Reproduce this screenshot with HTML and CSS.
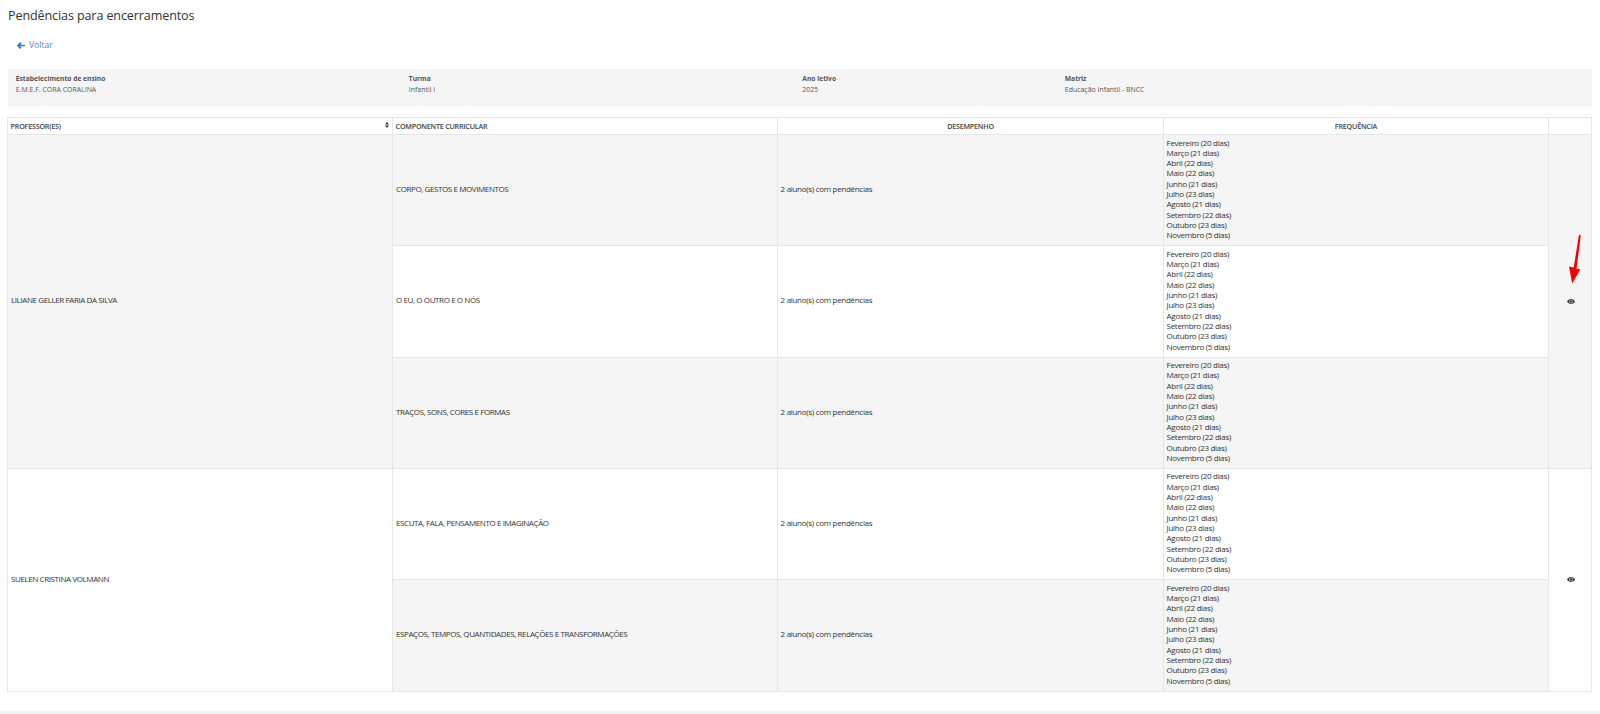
FILE: index.html
```html
<!DOCTYPE html>
<html lang="pt-BR">
<head>
<meta charset="utf-8">
<title>Pendências para encerramentos</title>
<link rel="stylesheet" href="styles.css">
</head>
<body>
<main class="page">
  <h1 class="title">Pendências para encerramentos</h1>
  <a class="back" href="#">
    <svg class="back-icon" viewBox="0 0 16 14"><path d="M7 0.6 L8.6 2.2 C9 2.6 9 3.2 8.6 3.6 L6 5.4 H14.6 C15.4 5.4 16 6 16 6.8 V7.4 C16 8.2 15.4 8.6 14.6 8.6 H6 L8.6 10.6 C9 11 9 11.6 8.6 12 L7 13.4 C6.6 13.8 6 13.8 5.6 13.4 L0.4 7.9 C0 7.5 0 6.9 0.4 6.5 L5.6 0.6 C6 0.2 6.6 0.2 7 0.6 Z"/></svg>
    Voltar
  </a>
  <section class="info">
    <div class="info-item"><strong>Estabelecimento de ensino</strong><span>E.M.E.F. CORA CORALINA</span></div>
    <div class="info-item"><strong>Turma</strong><span>Infantil I</span></div>
    <div class="info-item"><strong>Ano letivo</strong><span>2025</span></div>
    <div class="info-item"><strong>Matriz</strong><span>Educação Infantil - BNCC</span></div>
  </section>
  <table class="grid">
    <colgroup><col class="c-prof"><col class="c-comp"><col class="c-des"><col class="c-freq"><col class="c-act"></colgroup>
    <thead>
      <tr>
        <th class="sortable">PROFESSOR(ES)<svg class="sort" viewBox="0 0 6 9"><path d="M3 0 L6 3.6 H0 Z M3 9 L0 5.4 H6 Z"/></svg></th>
        <th>COMPONENTE CURRICULAR</th>
        <th class="center">DESEMPENHO</th>
        <th class="center">FREQUÊNCIA</th>
        <th></th>
      </tr>
    </thead>
    <tbody>
      <tr class="odd">
        <td rowspan="3" class="up">LILIANE GELLER FARIA DA SILVA</td>
        <td class="up">CORPO, GESTOS E MOVIMENTOS</td>
        <td>2 aluno(s) com pendências</td>
        <td class="freq">Fevereiro (20 dias)<br>Março (21 dias)<br>Abril (22 dias)<br>Maio (22 dias)<br>Junho (21 dias)<br>Julho (23 dias)<br>Agosto (21 dias)<br>Setembro (22 dias)<br>Outubro (23 dias)<br>Novembro (5 dias)</td>
        <td rowspan="3" class="center act"><svg class="eye" viewBox="0 0 16 10"><path d="M8 0 C4.4 0 1.6 2.2 0 5 C1.6 7.8 4.4 10 8 10 C11.6 10 14.4 7.8 16 5 C14.4 2.2 11.6 0 8 0 Z M8 1.4 C9.9 1.4 11.6 3.1 11.6 5 C11.6 6.9 9.9 8.6 8 8.6 C6.1 8.6 4.4 6.9 4.4 5 C4.4 3.1 6.1 1.4 8 1.4 Z"/><circle cx="8" cy="5" r="2.6"/></svg></td>
      </tr>
      <tr>
        <td class="up">O EU, O OUTRO E O NÓS</td>
        <td>2 aluno(s) com pendências</td>
        <td class="freq">Fevereiro (20 dias)<br>Março (21 dias)<br>Abril (22 dias)<br>Maio (22 dias)<br>Junho (21 dias)<br>Julho (23 dias)<br>Agosto (21 dias)<br>Setembro (22 dias)<br>Outubro (23 dias)<br>Novembro (5 dias)</td>
      </tr>
      <tr class="odd">
        <td class="up">TRAÇOS, SONS, CORES E FORMAS</td>
        <td>2 aluno(s) com pendências</td>
        <td class="freq">Fevereiro (20 dias)<br>Março (21 dias)<br>Abril (22 dias)<br>Maio (22 dias)<br>Junho (21 dias)<br>Julho (23 dias)<br>Agosto (21 dias)<br>Setembro (22 dias)<br>Outubro (23 dias)<br>Novembro (5 dias)</td>
      </tr>
      <tr>
        <td rowspan="2" class="up">SUELEN CRISTINA VOLMANN</td>
        <td class="up">ESCUTA, FALA, PENSAMENTO E IMAGINAÇÃO</td>
        <td>2 aluno(s) com pendências</td>
        <td class="freq">Fevereiro (20 dias)<br>Março (21 dias)<br>Abril (22 dias)<br>Maio (22 dias)<br>Junho (21 dias)<br>Julho (23 dias)<br>Agosto (21 dias)<br>Setembro (22 dias)<br>Outubro (23 dias)<br>Novembro (5 dias)</td>
        <td rowspan="2" class="center act"><svg class="eye" viewBox="0 0 16 10"><path d="M8 0 C4.4 0 1.6 2.2 0 5 C1.6 7.8 4.4 10 8 10 C11.6 10 14.4 7.8 16 5 C14.4 2.2 11.6 0 8 0 Z M8 1.4 C9.9 1.4 11.6 3.1 11.6 5 C11.6 6.9 9.9 8.6 8 8.6 C6.1 8.6 4.4 6.9 4.4 5 C4.4 3.1 6.1 1.4 8 1.4 Z"/><circle cx="8" cy="5" r="2.6"/></svg></td>
      </tr>
      <tr class="odd">
        <td class="up">ESPAÇOS, TEMPOS, QUANTIDADES, RELAÇÕES E TRANSFORMAÇÕES</td>
        <td>2 aluno(s) com pendências</td>
        <td class="freq">Fevereiro (20 dias)<br>Março (21 dias)<br>Abril (22 dias)<br>Maio (22 dias)<br>Junho (21 dias)<br>Julho (23 dias)<br>Agosto (21 dias)<br>Setembro (22 dias)<br>Outubro (23 dias)<br>Novembro (5 dias)</td>
      </tr>
    </tbody>
  </table>
</main>
<div class="footer-band"></div>
<svg class="annotation" viewBox="0 0 20 60"><path d="M11.4 0 L13.6 0.4 L8.6 39 L13 39.8 L3.6 56 L0 36.4 L5.4 37.6 Z"/></svg>
</body>
</html>
```
FILE: styles.css
```css
* { box-sizing: border-box; }
html, body { margin: 0; padding: 0; background: #fff; }
body {
  font-family: "Open Sans", "Noto Sans", sans-serif;
  font-size: 8px;
  letter-spacing: -0.3px;
  color: #333;
  height: 714px;
  overflow: hidden;
  position: relative;
}
.page { padding: 0 8px; }
.title {
  margin: 0;
  padding-top: 6px;
  font-size: 12.6px;
  letter-spacing: -0.13px;
  line-height: 20px;
  font-weight: 400;
  color: #333;
}
.back {
  display: flex;
  align-items: center;
  gap: 4px;
  margin: 12px 0 0 9px;
  height: 14px;
  font-size: 8.6px;
  letter-spacing: 0;
  line-height: 14px;
  color: #4a90c8;
  text-decoration: none;
}
.back-icon { width: 8px; height: 7px; fill: #337ab7; }
.info {
  display: grid;
  grid-template-columns: 393px 393.5px 262.5px 1fr;
  height: 37px;
  margin-top: 17px;
  padding: 3.6px 0 0 7.8px;
  background: #f5f5f5;
  color: #555;
  font-size: 6.95px;
  letter-spacing: 0;
}
.info-item strong, .info-item span { display: block; line-height: 11.6px; }
.info-item strong { font-size: 6.7px; font-weight: 700; }
.grid {
  width: 1585px;
  height: 574.5px;
  margin: 11px 0 0 -1px;
  border-collapse: collapse;
  table-layout: fixed;
  border: 1px solid #e7e7e7;
}
.c-prof { width: 385px; }
.c-comp { width: 385px; }
.c-des { width: 386px; }
.c-freq { width: 385px; }
.grid th, .grid td {
  border: 1px solid #e7e7e7;
  padding: 2px 2.6px 4px;
  text-align: left;
  vertical-align: middle;
  font-weight: 400;
  line-height: 10.33px;
}
.grid th { height: 17px; position: relative; font-size: 7.2px; letter-spacing: -0.23px; color: #444; font-weight: 600; padding: 2px 2.6px; }
.grid td.up { letter-spacing: -0.4px; padding-left: 3px; }
.grid .center { text-align: center; }
.grid td.act { padding: 0 0 2px 1.6px; }
.odd { background: #f5f5f5; }
.grid tr.odd td[rowspan="3"] { background: #f5f5f5; }
.sort { position: absolute; right: 3px; top: 3.5px; width: 4px; height: 6px; fill: #333; }
.eye { width: 8px; height: 5px; fill: #2f3a4a; vertical-align: middle; }
.footer-band { position: absolute; left: 0; right: 0; bottom: 0; height: 3px; background: #f2f2f2; }
.annotation { position: absolute; left: 1569px; top: 235px; width: 17.4px; height: 52px; fill: #f40000; }
```
